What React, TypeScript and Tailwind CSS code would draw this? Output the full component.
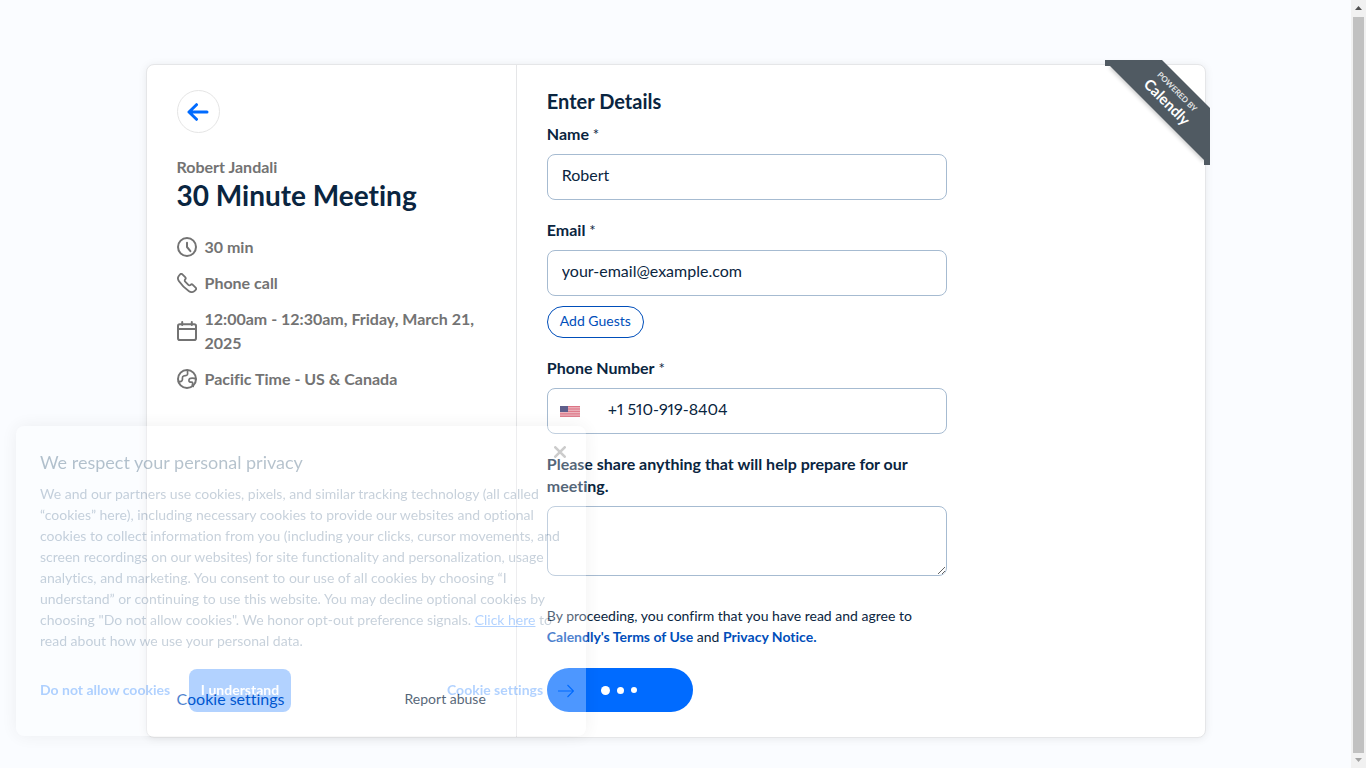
import React from 'react';

const Required = () => <span className="text-[15px] leading-none font-normal">{'\u00a0'}*</span>;

const inputClass =
  'mt-[9px] block h-[46px] w-full rounded-lg border border-[#a6bbd1] bg-white px-[14px] pb-[5px] text-base text-[#0a2540] outline-none';
const labelClass = 'block h-[22px] text-base leading-[21px] font-bold text-[#0a2540]';

function Detail({ icon, children }: { icon: React.ReactNode; children: React.ReactNode }) {
  return (
    <li className="flex items-center gap-2">
      <svg viewBox="0 0 10 10" className="h-5 w-5 shrink-0" fill="none" stroke="currentColor" strokeLinecap="round" strokeLinejoin="round">
        {icon}
      </svg>
      <span>{children}</span>
    </li>
  );
}

function EventInfo() {
  return (
    <section className="flex w-[35%] shrink-0 flex-col border-r border-[#e5e6e8] px-[30px] pt-[25px] pb-[26px]">
      <button
        type="button"
        aria-label="Back"
        className="flex h-[43px] w-[43px] items-center justify-center rounded-full border border-[#e5e5e5]"
      >
        <svg viewBox="0 0 22 18" className="h-[18px] w-[22px]" fill="none" stroke="#006bff" strokeWidth="3" strokeLinecap="round" strokeLinejoin="round">
          <path d="M20 9H2M9.5 1.7 2 9l7.5 7.3" />
        </svg>
      </button>
      <p className="mt-[22px] text-base leading-6 font-bold text-[#737373]">Robert Jandali</p>
      <h1 className="text-[28px] leading-8 font-bold text-[#0a2540]">30 Minute Meeting</h1>
      <ul className="mt-6 flex flex-col gap-3 text-base leading-6 font-bold text-[#737373]">
        <Detail
          icon={
            <>
              <circle cx="5" cy="5" r="4.5" />
              <path d="M5 2.9V5l1.7 2.1" />
            </>
          }
        >
          30 min
        </Detail>
        <Detail
          icon={
            <path
              strokeWidth=".9"
              d="M5.991 9.083a2.38 2.38 0 0 0 2.997-.317l.333-.333a.793.793 0 0 0 0-1.121L7.917 5.908a.793.793 0 0 0-1.121 0a.791.791 0 0 1-1.12 0L4.092 4.324a.791.791 0 0 1 0-1.12a.793.793 0 0 0 0-1.121L2.688.679a.793.793 0 0 0-1.121 0l-.333.333A2.38 2.38 0 0 0 .917 4.009A18.5 18.5 0 0 0 5.991 9.083z"
            />
          }
        >
          Phone call
        </Detail>
        <Detail
          icon={
            <>
              <rect x=".5" y="1.6" width="9" height="7.9" rx=".9" />
              <path d="M.5 4h9M2.6 2V.5M7.4 2V.5" />
            </>
          }
        >
          12:00am - 12:30am, Friday, March 21, 2025
        </Detail>
        <Detail
          icon={
            <>
              <circle cx="5" cy="5" r="4.5" />
              <path
                strokeWidth=".85"
                d="M.7 6.1c1 .4 1.9.1 2-.8.1-.8-.3-1.5.6-1.8.9-.3 1.5 0 1.9-.7.4-.7-.3-1.5.2-2.1M9.4 5.1C8.8 4.4 6.3 4.2 6 5.3c-.3 1.1.5 1.3 1.2 1.3.9 0 .6.7.5 1.3-.1.5.1.7.4.8"
              />
            </>
          }
        >
          Pacific Time - US &amp; Canada
        </Detail>
      </ul>
      <footer className="mt-auto flex items-center justify-between leading-6">
        <a href="#cookies" className="text-base text-[#004eba]">
          Cookie settings
        </a>
        <a href="#report" className="text-sm leading-6 text-[#0a2540]">
          Report abuse
        </a>
      </footer>
    </section>
  );
}

function Flag() {
  return (
    <svg viewBox="0 0 20 11" className="absolute left-[13px] top-[18px] h-[11px] w-5 opacity-70" aria-hidden="true">
      <rect width="20" height="11" fill="#c8203c" />
      <path d="M0 1.3h20M0 3h20M0 4.7h20M0 6.4h20M0 8.1h20M0 9.8h20" stroke="#fff" strokeWidth=".6" />
      <rect width="8" height="6" fill="#1c1c5c" />
    </svg>
  );
}

function DetailsForm() {
  return (
    <form className="flex-1 px-[30px] pt-6 pb-[25px]" onSubmit={(e) => e.preventDefault()}>
      <div className="w-full max-w-[400px]">
        <h2 className="text-xl leading-6 font-bold text-[#0a2540]">Enter Details</h2>

        <label htmlFor="name" className={`mt-[10px] ${labelClass}`}>
          Name
          <Required />
        </label>
        <input id="name" type="text" defaultValue="Robert" className={inputClass} />

        <label htmlFor="email" className={`mt-[19px] ${labelClass}`}>
          Email
          <Required />
        </label>
        <input id="email" type="email" defaultValue="your-email@example.com" className={inputClass} />
        <button
          type="button"
          className="mt-[10px] block h-8 w-[97px] rounded-full border border-[#004eba] pb-0.5 text-sm whitespace-nowrap text-[#004eba]"
        >
          Add Guests
        </button>

        <label htmlFor="phone" className={`mt-[19px] ${labelClass}`}>
          Phone Number
          <Required />
        </label>
        <div className="relative mt-[9px]">
          <input
            id="phone"
            type="tel"
            defaultValue="+1 510-919-8404"
            className="block h-[46px] w-full rounded-lg border border-[#a6bbd1] bg-white pr-[14px] pb-[5px] pl-[60px] text-base text-[#0a2540] proportional-nums outline-none"
          />
          <Flag />
        </div>

        <label htmlFor="notes" className="mt-[19px] block text-base leading-[22px] font-bold text-[#0a2540]">
          Please share anything that will help prepare for our meeting.
        </label>
        <textarea
          id="notes"
          className="mt-[9px] block h-[70px] w-full resize-y rounded-lg border border-[#a6bbd1] bg-white px-[14px] py-2 text-base text-[#0a2540] outline-none"
        />

        <p className="mt-[29px] text-sm leading-[21px] text-[#0a2540]">
          By proceeding, you confirm that you have read and agree to{' '}
          <a href="#terms" className="font-bold text-[#004eba]">
            Calendly's Terms of Use
          </a>{' '}
          and{' '}
          <a href="#privacy" className="font-bold text-[#004eba]">
            Privacy Notice.
          </a>
        </p>
        <button
          type="submit"
          aria-label="Scheduling"
          className="mt-[21px] flex h-11 w-[146px] items-center justify-center gap-[7px] rounded-full bg-[#006bff] pr-0.5"
        >
          <span className="h-[9px] w-[9px] rounded-full bg-white" />
          <span className="h-[7px] w-[7px] rounded-full bg-white" />
          <span className="h-[6px] w-[6px] rounded-full bg-white" />
        </button>
      </div>
    </form>
  );
}

function Ribbon() {
  return (
    <a href="#calendly" className="absolute -top-[5px] -right-[5px] block h-[105px] w-[105px] text-white">
      <svg viewBox="0 0 105 105" className="h-full w-full overflow-visible" aria-hidden="true">
        <path d="M6 6l94 94" stroke="#000" strokeOpacity=".25" strokeWidth="4" className="blur-[2px]" />
        <path d="M0 0h57l48 48v57h-6v-5L5 6H0z" fill="#505a62" />
      </svg>
      <span className="absolute top-6 left-4 flex w-[100px] rotate-45 flex-col items-center">
        <span className="text-[8px] leading-[10px] font-bold whitespace-nowrap text-[#e0e3e5]">POWERED BY</span>
        <span className="text-[15px] leading-[18px] font-bold">Calendly</span>
      </span>
    </a>
  );
}

function CookieBanner() {
  return (
    <div
      role="dialog"
      aria-label="Privacy"
      className="fixed bottom-8 left-4 w-[570px] rounded-lg bg-white p-6 text-[#476788] opacity-30 shadow-[0_0_18px_rgba(0,0,0,0.2)]"
    >
      <button type="button" aria-label="Close" className="absolute top-5 right-5 text-[#565656]">
        <svg viewBox="0 0 12 12" className="h-3 w-3" stroke="currentColor" strokeWidth="2.6" strokeLinecap="round">
          <path d="M1.3 1.3l9.400 9.400M10.700 1.300l-9.400 9.400" />
        </svg>
      </button>
      <h2 className="text-lg leading-6 text-[#0b3558]">We respect your personal privacy</h2>
      <p className="mt-[9px] text-sm leading-[21px] whitespace-nowrap">
        We and our partners use cookies, pixels, and similar tracking technology (all called
        <br />
        “cookies” here), including necessary cookies to provide our websites and optional
        <br />
        cookies to collect information from you (including your clicks, cursor movements, and
        <br />
        screen recordings on our websites) for site functionality and personalization, usage
        <br />
        analytics, and marketing. You consent to our use of all cookies by choosing “I
        <br />
        understand” or continuing to use this website. You may decline optional cookies by
        <br />
        choosing "Do not allow cookies". We honor opt-out preference signals.{' '}
        <a href="#policy" className="text-[#006bff] underline">
          Click here
        </a>{' '}
        to
        <br />
        read about how we use your personal data.
      </p>
      <div className="-mr-3 mt-[18px] flex items-center text-sm font-bold whitespace-nowrap text-[#006bff]">
        <button type="button" className="w-[133px] pb-0.5 text-left">
          Do not allow cookies
        </button>
        <button type="button" className="ml-4 h-[43px] w-[102px] rounded-lg bg-[#006bff] pb-0.5 text-white">
          I understand
        </button>
        <button type="button" className="ml-auto flex w-[127px] items-center justify-between">
          <span className="pb-0.5">Cookie settings</span>
          <svg viewBox="0 0 16 14" className="h-[14px] w-4" fill="none" stroke="currentColor" strokeWidth="1.2">
            <path d="M0 7h15.500M9.500 1l6 6-6 6" />
          </svg>
        </button>
      </div>
    </div>
  );
}

function Scrollbar() {
  return (
    <div className="flex w-[15px] shrink-0 flex-col items-center bg-[#f1f1f1]" aria-hidden="true">
      <svg viewBox="0 0 15 17" className="h-[17px] w-[15px]">
        <path d="M4 10h7L7.500 6z" fill="#505050" />
      </svg>
      <div className="w-[11px] flex-1 bg-[#c1c1c1]" />
      <svg viewBox="0 0 15 15" className="h-[15px] w-[15px]">
        <path d="M4 5h7L7.500 9z" fill="#a3a3a3" />
      </svg>
    </div>
  );
}

export default function App() {
  return (
    <div className="flex h-screen overflow-hidden bg-[#fafcff] font-['Lato',sans-serif] [font-variant-ligatures:none]">
      <main className="flex-1 px-4 pt-16">
        <div className="relative mx-auto flex w-full max-w-[1060px] rounded-lg border border-[#e5e6e8] bg-white shadow-[0_1px_8px_rgba(0,0,0,0.08)]">
          <EventInfo />
          <DetailsForm />
          <Ribbon />
        </div>
      </main>
      <Scrollbar />
      <CookieBanner />
    </div>
  );
}
